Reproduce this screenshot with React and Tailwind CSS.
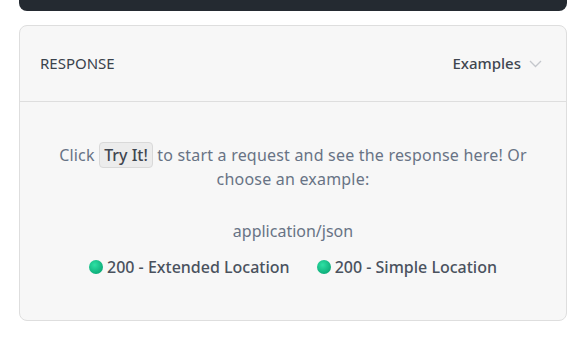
export default function App() {
  const examples = ['200 - Extended Location', '200 - Simple Location'];

  return (
    <div className="w-[586px] h-[347px] bg-white px-[19px] font-['Noto_Sans',sans-serif]">
      <div className="h-[11px] bg-[#242a31] rounded-b-lg" />

      <div className="mt-[14px] rounded-lg border border-[#dedede] bg-[#f7f7f7]">
        <div className="h-[76px] px-[20px] flex items-center justify-between border-b border-[#dedede]">
          <span className="text-[15px] text-[#3a424c]">RESPONSE</span>
          <button className="flex items-center gap-[8px] pr-[4px] text-[15px] font-medium text-[#3f4650]">
            Examples
            <svg width="13" height="8" viewBox="0 0 13 8" fill="none" stroke="#c4c7cc" strokeWidth="1.3">
              <path d="M1 1l5.5 5.5L12 1" />
            </svg>
          </button>
        </div>

        <div className="pt-[41px] pb-[41px] px-[20px] text-center">
          <p className="text-[16px] leading-[24px] text-[#687385] px-[14px] tracking-[0.2px]">
            Click{' '}
            <span className="inline-block px-[4px] py-[1px] -my-[2px] leading-[22px] rounded border border-[#d9d9d9] bg-[#ececec] font-medium text-[#3f4650] tracking-normal">
              Try It!
            </span>{' '}
            to start a request and see the response here! Or choose an example:
          </p>

          <div className="mt-[28px] text-[16px] leading-[24px] text-[#687385]">application/json</div>

          <div className="mt-[12px] flex items-center justify-center gap-[27px]">
            {examples.map(ex => (
              <div key={ex} className="flex items-center gap-[4px]">
                <span className="w-[14px] h-[14px] rounded-full bg-[radial-gradient(circle_at_40%_35%,#2ee0a4,#0fb07c_70%,#0b8f63)]" />
                <span className="text-[16px] leading-[24px] font-medium text-[#4a525e]">{ex}</span>
              </div>
            ))}
          </div>
        </div>
      </div>
    </div>
  );
}
